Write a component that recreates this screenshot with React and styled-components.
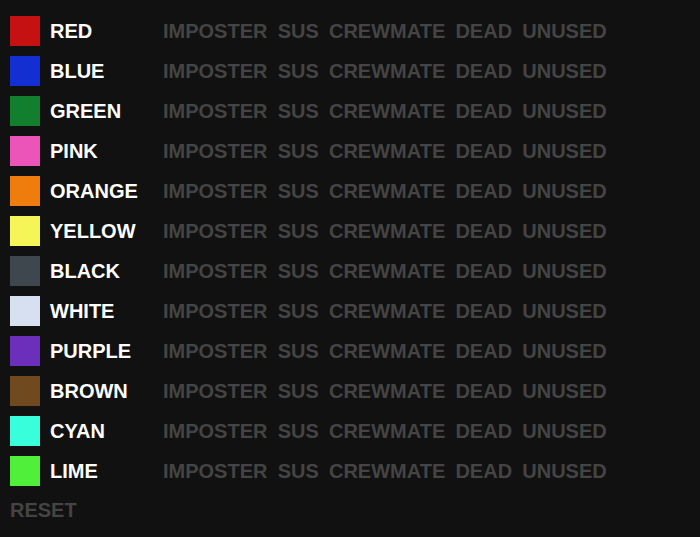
import React from 'react';
import styled, { createGlobalStyle } from 'styled-components';

const colors = [
  { name: 'RED', hex: '#c51111' },
  { name: 'BLUE', hex: '#132ed1' },
  { name: 'GREEN', hex: '#117f2d' },
  { name: 'PINK', hex: '#ed54ba' },
  { name: 'ORANGE', hex: '#ef7d0d' },
  { name: 'YELLOW', hex: '#f5f557' },
  { name: 'BLACK', hex: '#3f474e' },
  { name: 'WHITE', hex: '#d6e0f0' },
  { name: 'PURPLE', hex: '#6b2fbb' },
  { name: 'BROWN', hex: '#71491e' },
  { name: 'CYAN', hex: '#38fedc' },
  { name: 'LIME', hex: '#50ef39' },
];

const states = ['IMPOSTER', 'SUS', 'CREWMATE', 'DEAD', 'UNUSED'];

const GlobalStyle = createGlobalStyle`
  html, body {
    margin: 0;
    background: #111111;
  }
  body {
    font-family: "Liberation Sans", Arial, sans-serif;
  }
`;

const App = () => {
  return (
    <Tracker>
      <GlobalStyle />
      {colors.map((c) => (
        <Row key={c.name}>
          <Swatch color={c.hex} />
          <Name>{c.name}</Name>
          <States>
            {states.map((s) => (
              <StateButton key={s}>{s}</StateButton>
            ))}
          </States>
        </Row>
      ))}
      <Reset>RESET</Reset>
    </Tracker>
  );
};

const Tracker = styled.div`
  display: flex;
  flex-direction: column;
  padding: 11px 10px 0;
  min-height: 537px;
  box-sizing: border-box;
  background: #111111;
  font-weight: bold;
  font-size: 20px;
`;

const Row = styled.div`
  display: flex;
  align-items: center;
  height: 40px;
  line-height: 22px;
`;

const Swatch = styled.div`
  width: 30px;
  height: 30px;
  background: ${(p) => p.color};
  flex-shrink: 0;
`;

const Name = styled.div`
  width: 113px;
  margin-left: 10px;
  margin-top: -1px;
  color: #ffffff;
`;

const States = styled.div`
  display: flex;
  gap: 10.2px;
  margin-top: -1px;
`;

const StateButton = styled.span`
  color: #444444;
  cursor: pointer;
`;

const Reset = styled.div`
  margin-top: 8px;
  color: #444444;
  cursor: pointer;
`;

export default App;
